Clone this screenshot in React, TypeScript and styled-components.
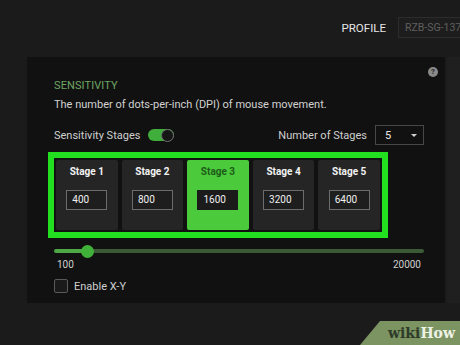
import styled, { createGlobalStyle } from "styled-components";

const GlobalStyle = createGlobalStyle`
  html, body {
    margin: 0;
    padding: 0;
    background: #1b1b1b;
    font-family: Roboto, "Liberation Sans", sans-serif;
  }
`;

const Page = styled.div`
  position: relative;
  width: 460px;
  height: 345px;
  overflow: hidden;
  background: #1b1b1b;
`;

const Header = styled.div`
  display: flex;
  justify-content: flex-end;
  align-items: center;
  gap: 12px;
  height: 21px;
  padding-top: 17px;
  margin-right: -38px;
`;

const HeaderLabel = styled.span`
  font-size: 11.5px;
  color: #e6e6e6;
`;

const ProfileBox = styled.div`
  width: 100px;
  height: 21px;
  box-sizing: border-box;
  border: 1px solid #2c2c2c;
  background: #1d1d1d;
  color: #5f5f5f;
  font-size: 10.5px;
  line-height: 19px;
  padding-left: 6px;
  white-space: nowrap;
  overflow: hidden;
`;

const PanelRow = styled.div`
  display: flex;
  gap: 2px;
  margin-top: 19px;
  padding-left: 27px;
`;

const Panel = styled.div`
  flex: none;
  width: 418px;
  height: 246px;
  box-sizing: border-box;
  background: #111111;
  padding: 10px 21px 0 27px;
`;

const SidePanel = styled.div`
  flex: none;
  width: 60px;
  height: 246px;
  background: #1f1f1f;
`;

const HelpRow = styled.div`
  display: flex;
  justify-content: flex-end;
  margin-right: -14px;
`;

const HelpIcon = styled.div`
  width: 10px;
  height: 10px;
  border-radius: 50%;
  background: #8a8a8a;
  color: #2a2a2a;
  font-size: 8px;
  font-weight: bold;
  line-height: 10px;
  text-align: center;
`;

const Title = styled.div`
  margin-top: 2px;
  font-size: 11px;
  line-height: 14px;
  color: #6fa764;
  letter-spacing: 0.1px;
`;

const Desc = styled.div`
  margin-top: 5px;
  font-size: 11px;
  line-height: 14px;
  color: #d2d2d2;
`;

const StagesRow = styled.div`
  display: flex;
  justify-content: space-between;
  align-items: center;
  height: 20px;
  margin-top: 13px;
`;

const Group = styled.div`
  display: flex;
  align-items: center;
  gap: 8px;
`;

const Label = styled.span`
  font-size: 11px;
  color: #cfcfcf;
`;

const Toggle = styled.div`
  display: flex;
  justify-content: flex-end;
  align-items: center;
  width: 26px;
  height: 12px;
  border-radius: 6px;
  background: #3fae3a;
`;

const Knob = styled.div`
  width: 11px;
  height: 11px;
  border-radius: 50%;
  background: #161616;
  border: 1px solid #6e6e6e;
`;

const Select = styled.div`
  display: flex;
  justify-content: space-between;
  align-items: center;
  width: 49px;
  height: 20px;
  box-sizing: border-box;
  border: 1px solid #474747;
  background: #111;
  padding: 0 6px 0 9px;
  color: #e8e8e8;
  font-size: 11px;
`;

const Caret = styled.div`
  width: 0;
  height: 0;
  border-left: 3px solid transparent;
  border-right: 3px solid transparent;
  border-top: 3px solid #d0d0d0;
`;

const StageBox = styled.div`
  display: flex;
  gap: 4px;
  width: 340px;
  height: 86px;
  box-sizing: border-box;
  margin: 7px 0 0 -6px;
  border: 6px solid #22e01f;
  padding: 2px;
  background: #111;
`;

const Card = styled.div<{ $active?: boolean }>`
  flex: 1;
  display: flex;
  flex-direction: column;
  align-items: center;
  border-radius: 2px;
  background: ${({ $active }) => ($active ? "#4bcb3c" : "#252525")};
  padding-top: 6px;
`;

const CardTitle = styled.div<{ $active?: boolean }>`
  font-size: 10px;
  line-height: 12px;
  font-weight: bold;
  color: ${({ $active }) => ($active ? "#1d5c18" : "#f2f2f2")};
`;

const ValueBox = styled.div<{ $active?: boolean }>`
  margin-top: 12px;
  width: 41px;
  height: 20px;
  box-sizing: border-box;
  border: 1px solid ${({ $active }) => ($active ? "#1b1b1b" : "#6c6c6c")};
  background: ${({ $active }) => ($active ? "#1b1b1b" : "#1e1e1e")};
  color: #f0f0f0;
  font-size: 10px;
  line-height: 18px;
  padding-left: 5px;
`;

const Slider = styled.div`
  display: flex;
  align-items: center;
  height: 12px;
  margin-top: 7px;
`;

const Filled = styled.div`
  height: 4px;
  border-radius: 2px 0 0 2px;
  background: #4ca943;
`;

const Thumb = styled.div`
  flex: none;
  width: 13px;
  height: 13px;
  margin: 0 -6px;
  border-radius: 50%;
  background: #40b23a;
  position: relative;
`;

const Rest = styled.div`
  flex: 1;
  height: 4px;
  border-radius: 0 2px 2px 0;
  background: #3b5a35;
`;

const RangeLabels = styled.div`
  display: flex;
  justify-content: space-between;
  margin-top: 2px;
  padding: 0 3px;
  font-size: 10px;
  line-height: 12px;
  color: #d0d0d0;
`;

const CheckRow = styled.div`
  display: flex;
  align-items: center;
  gap: 6px;
  margin-top: 8px;
`;

const Checkbox = styled.div`
  width: 14px;
  height: 14px;
  box-sizing: border-box;
  border: 1px solid #5a5a5a;
  border-radius: 2px;
  background: #1a1a1a;
`;

const Watermark = styled.div`
  position: absolute;
  right: 0;
  bottom: 0;
  width: 100px;
  height: 24px;
  background: #7c9462;
  clip-path: polygon(20px 0, 100% 0, 100% 100%, 0 100%);
  display: flex;
  align-items: center;
  justify-content: flex-end;
  padding-right: 5px;
  box-sizing: border-box;
  font-family: "DejaVu Serif", "Liberation Serif", serif;
  font-weight: bold;
  font-size: 14px;
`;

const Wiki = styled.span`
  color: #2f3b29;
`;

const How = styled.span`
  color: #eef2e6;
`;

const stages = [
  { name: "Stage 1", dpi: 400 },
  { name: "Stage 2", dpi: 800 },
  { name: "Stage 3", dpi: 1600, active: true },
  { name: "Stage 4", dpi: 3200 },
  { name: "Stage 5", dpi: 6400 },
];

export default function App() {
  return (
    <Page>
      <GlobalStyle />
      <Header>
        <HeaderLabel>PROFILE</HeaderLabel>
        <ProfileBox>RZB-SG-1376</ProfileBox>
      </Header>
      <PanelRow>
        <Panel>
          <HelpRow>
            <HelpIcon>?</HelpIcon>
          </HelpRow>
          <Title>SENSITIVITY</Title>
          <Desc>The number of dots-per-inch (DPI) of mouse movement.</Desc>
          <StagesRow>
            <Group>
              <Label>Sensitivity Stages</Label>
              <Toggle>
                <Knob />
              </Toggle>
            </Group>
            <Group>
              <Label>Number of Stages</Label>
              <Select>
                5
                <Caret />
              </Select>
            </Group>
          </StagesRow>
          <StageBox>
            {stages.map((s) => (
              <Card key={s.name} $active={s.active}>
                <CardTitle $active={s.active}>{s.name}</CardTitle>
                <ValueBox $active={s.active}>{s.dpi}</ValueBox>
              </Card>
            ))}
          </StageBox>
          <Slider>
            <Filled style={{ width: 33 }} />
            <Thumb />
            <Rest />
          </Slider>
          <RangeLabels>
            <span>100</span>
            <span>20000</span>
          </RangeLabels>
          <CheckRow>
            <Checkbox />
            <Label>Enable X-Y</Label>
          </CheckRow>
        </Panel>
        <SidePanel />
      </PanelRow>
      <Watermark>
        <Wiki>wiki</Wiki>
        <How>How</How>
      </Watermark>
    </Page>
  );
}
